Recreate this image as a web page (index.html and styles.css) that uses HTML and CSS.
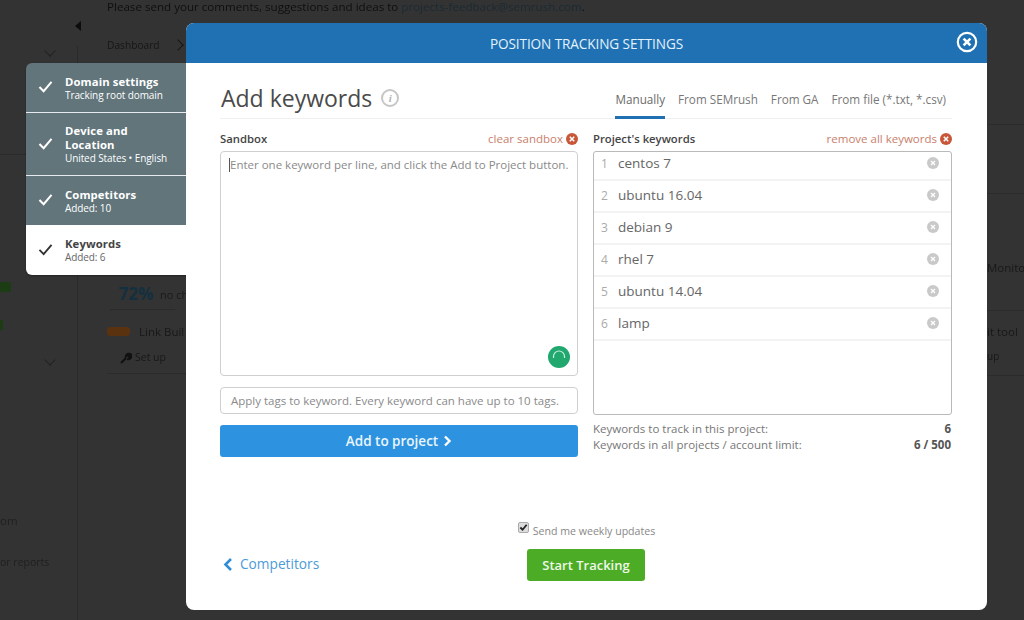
FILE: index.html
```html
<!DOCTYPE html>
<html lang="en">
<head>
<meta charset="utf-8">
<title>Position Tracking Settings</title>
<link rel="stylesheet" href="styles.css">
</head>
<body>
<div class="backdrop">
  <p class="bg-notice">Please send your comments, suggestions and ideas to <span class="bg-link">projects-feedback@semrush.com</span>.</p>
  <span class="bg-arrow"></span>
  <span class="bg-crumb">Dashboard</span>
  <span class="bg-chev bg-chev-c"></span>
  <span class="bg-vline"></span>
  <span class="bg-hline bg-hline-a"></span>
  <span class="bg-hline bg-hline-b"></span>
  <span class="bg-hline bg-hline-c"></span>
  <span class="bg-hline bg-hline-d"></span>
  <span class="bg-hline bg-hline-e"></span>
  <span class="bg-hline bg-hline-f"></span>
  <span class="bg-hline bg-hline-g"></span>
  <span class="bg-chev bg-chev-a"></span>
  <span class="bg-chev bg-chev-b"></span>
  <span class="bg-green bg-green-a"></span>
  <span class="bg-green bg-green-b"></span>
  <span class="bg-pct">72%</span>
  <span class="bg-nochange">no ch</span>
  <span class="bg-badge"></span>
  <span class="bg-text bg-link-building">Link Buil</span>
  <span class="bg-text bg-setup">Set up</span>
  <svg class="bg-wrench" viewBox="0 0 12 12"><path d="M1 11 L6 6 M6 6 A3 3 0 0 1 10 2 L8 4 L9 5 L11 3 A3 3 0 0 1 7 7" fill="none" stroke="#111" stroke-width="2"/></svg>
  <span class="bg-text bg-monito">Monito</span>
  <span class="bg-text bg-tool">it tool</span>
  <span class="bg-text bg-up">up</span>
  <span class="bg-text bg-om">om</span>
  <span class="bg-text bg-report">or reports</span>
</div>

<nav class="steps">
  <div class="step step-done step-a">
    <svg class="check" viewBox="0 0 16 14"><path d="M1.5 7.5 L6 12 L14.5 2" fill="none" stroke="currentColor" stroke-width="2.2"/></svg>
    <div><div class="step-title">Domain settings</div><div class="step-sub">Tracking root domain</div></div>
  </div>
  <div class="step step-done step-b">
    <svg class="check" viewBox="0 0 16 14"><path d="M1.5 7.5 L6 12 L14.5 2" fill="none" stroke="currentColor" stroke-width="2.2"/></svg>
    <div><div class="step-title">Device and<br>Location</div><div class="step-sub">United States • English</div></div>
  </div>
  <div class="step step-done step-c">
    <svg class="check" viewBox="0 0 16 14"><path d="M1.5 7.5 L6 12 L14.5 2" fill="none" stroke="currentColor" stroke-width="2.2"/></svg>
    <div><div class="step-title">Competitors</div><div class="step-sub">Added: 10</div></div>
  </div>
  <div class="step step-current">
    <svg class="check" viewBox="0 0 16 14"><path d="M1.5 7.5 L6 12 L14.5 2" fill="none" stroke="currentColor" stroke-width="2"/></svg>
    <div><div class="step-title">Keywords</div><div class="step-sub">Added: 6</div></div>
  </div>
</nav>

<main class="modal">
  <header class="modal-head">
    <span class="modal-title">POSITION TRACKING SETTINGS</span>
    <svg class="modal-close" viewBox="0 0 22 22"><circle cx="11" cy="11" r="9.2" fill="none" stroke="#fff" stroke-width="2.2"/><path d="M7.6 7.6 L14.4 14.4 M14.4 7.6 L7.6 14.4" stroke="#fff" stroke-width="2.6"/></svg>
  </header>
  <div class="modal-body">
    <div class="title-row">
      <div class="title-left">
        <h1 class="page-title">Add keywords</h1>
        <span class="info"><i>i</i></span>
      </div>
      <div class="tabs">
        <span class="tab tab-active">Manually</span>
        <span class="tab">From SEMrush</span>
        <span class="tab">From GA</span>
        <span class="tab">From file (*.txt, *.csv)</span>
      </div>
    </div>
    <div class="columns">
      <section class="col col-left">
        <div class="col-head">
          <span class="col-label">Sandbox</span>
          <span class="col-action">clear sandbox <svg class="x-dot" viewBox="0 0 12 12"><circle cx="6" cy="6" r="6" fill="#c8573a"/><path d="M3.8 3.8 L8.2 8.2 M8.2 3.8 L3.8 8.2" stroke="#fff" stroke-width="1.5"/></svg></span>
        </div>
        <div class="sandbox">
          <span class="placeholder"><span class="caret"></span>Enter one keyword per line, and click the Add to Project button.</span>
          <svg class="spinner" viewBox="0 0 22 22"><circle cx="11" cy="11" r="11" fill="#21a86e"/><path d="M5.5 12 L5.5 10.5 A5.5 5.5 0 0 1 16.5 10.5 L16.5 12" fill="none" stroke="#c6f0e0" stroke-width="1.2"/></svg>
        </div>
        <div class="tags">Apply tags to keyword. Every keyword can have up to 10 tags.</div>
        <div class="add-btn">Add to project <svg class="chev-r" viewBox="0 0 9 12"><path d="M2 1.5 L6.5 6 L2 10.5" fill="none" stroke="#fff" stroke-width="2.4"/></svg></div>
      </section>
      <section class="col col-right">
        <div class="col-head">
          <span class="col-label">Project's keywords</span>
          <span class="col-action">remove all keywords <svg class="x-dot" viewBox="0 0 12 12"><circle cx="6" cy="6" r="6" fill="#c8573a"/><path d="M3.8 3.8 L8.2 8.2 M8.2 3.8 L3.8 8.2" stroke="#fff" stroke-width="1.5"/></svg></span>
        </div>
        <ol class="kw-list">
          <li class="kw"><span class="kw-n">1</span><span class="kw-t">centos 7</span><svg class="kw-x" viewBox="0 0 12 12"><circle cx="6" cy="6" r="6" fill="#c9c9c9"/><path d="M4 4 L8 8 M8 4 L4 8" stroke="#fff" stroke-width="1.3"/></svg></li>
          <li class="kw"><span class="kw-n">2</span><span class="kw-t">ubuntu 16.04</span><svg class="kw-x" viewBox="0 0 12 12"><circle cx="6" cy="6" r="6" fill="#c9c9c9"/><path d="M4 4 L8 8 M8 4 L4 8" stroke="#fff" stroke-width="1.3"/></svg></li>
          <li class="kw"><span class="kw-n">3</span><span class="kw-t">debian 9</span><svg class="kw-x" viewBox="0 0 12 12"><circle cx="6" cy="6" r="6" fill="#c9c9c9"/><path d="M4 4 L8 8 M8 4 L4 8" stroke="#fff" stroke-width="1.3"/></svg></li>
          <li class="kw"><span class="kw-n">4</span><span class="kw-t">rhel 7</span><svg class="kw-x" viewBox="0 0 12 12"><circle cx="6" cy="6" r="6" fill="#c9c9c9"/><path d="M4 4 L8 8 M8 4 L4 8" stroke="#fff" stroke-width="1.3"/></svg></li>
          <li class="kw"><span class="kw-n">5</span><span class="kw-t">ubuntu 14.04</span><svg class="kw-x" viewBox="0 0 12 12"><circle cx="6" cy="6" r="6" fill="#c9c9c9"/><path d="M4 4 L8 8 M8 4 L4 8" stroke="#fff" stroke-width="1.3"/></svg></li>
          <li class="kw"><span class="kw-n">6</span><span class="kw-t">lamp</span><svg class="kw-x" viewBox="0 0 12 12"><circle cx="6" cy="6" r="6" fill="#c9c9c9"/><path d="M4 4 L8 8 M8 4 L4 8" stroke="#fff" stroke-width="1.3"/></svg></li>
        </ol>
        <div class="stat stat-first"><span>Keywords to track in this project:</span><b>6</b></div>
        <div class="stat"><span>Keywords in all projects / account limit:</span><b>6 / 500</b></div>
      </section>
    </div>
    <div class="foot">
      <a class="back"><svg class="chev-l" viewBox="0 0 10 13"><path d="M8 1 L2.5 6.5 L8 12" fill="none" stroke="#2e8fd8" stroke-width="2.6"/></svg>Competitors</a>
      <div class="foot-center">
        <label class="updates"><span class="cb"><svg viewBox="0 0 10 10"><path d="M1.5 5 L4 7.5 L8.5 2" fill="none" stroke="#222" stroke-width="2"/></svg></span>Send me weekly updates</label>
        <div class="start-btn">Start Tracking</div>
      </div>
    </div>
  </div>
</main>
</body>
</html>
```
FILE: styles.css
```css
* { box-sizing: border-box; }
html, body { margin: 0; padding: 0; }
body {
  width: 1024px;
  height: 620px;
  overflow: hidden;
  position: relative;
  background: #333333;
  font-family: "Open Sans", "Noto Sans", "Liberation Sans", sans-serif;
  color: #555;
}

/* dimmed page behind the dialog */
.backdrop { position: absolute; inset: 0; overflow: hidden; filter: blur(.5px); }
.backdrop > * { position: absolute; }
.bg-notice { left: 107px; top: 0; margin: 0; font-size: 11.6px; line-height: 14px; color: #0f0f0f; white-space: nowrap; }
.bg-link { color: #1b2a33; }
.bg-arrow { left: 75px; top: 21px; border: 5px solid transparent; border-right: 6px solid #0c0c0c; border-left: 0; height: 0; width: 0; }
.bg-crumb { left: 107px; top: 38px; font-size: 10.2px; color: #161616; }
.bg-vline { left: 77px; top: 46px; bottom: 0; width: 1px; background: #2a2a2a; }
.bg-hline { height: 1px; background: #2b2b2b; }
.bg-hline-a { left: 0; width: 26px; top: 154px; }
.bg-hline-b { left: 987px; right: 0; top: 124px; }
.bg-hline-c { left: 987px; right: 0; top: 193px; }
.bg-hline-d { left: 987px; right: 0; top: 310px; }
.bg-hline-e { left: 987px; right: 0; top: 375px; }
.bg-hline-f { left: 107px; width: 79px; top: 373px; }
.bg-hline-g { left: 110px; width: 65px; top: 309px; }
.bg-chev { width: 8px; height: 8px; border-right: 1.5px solid #222; border-bottom: 1.5px solid #222; transform: rotate(45deg); left: 46px; }
.bg-chev-a { top: 47px; }
.bg-chev-b { top: 356px; }
.bg-chev-c { left: 174px; top: 41px; transform: rotate(-45deg); border-color: #161616; }
.bg-green { background: #1c3d14; left: 0; height: 10px; }
.bg-green-a { width: 11px; top: 282px; }
.bg-green-b { width: 3px; top: 320px; }
.bg-pct { left: 119px; top: 283px; font-size: 17px; line-height: 22px; font-weight: 700; color: #12303f; }
.bg-nochange { left: 160px; top: 287px; font-size: 11px; line-height: 16px; color: #1a1a1a; }
.bg-badge { left: 107px; top: 327px; width: 23px; height: 9px; border-radius: 3px; background: #5a3210; }
.bg-text { font-size: 11.5px; line-height: 16px; color: #181818; white-space: nowrap; }
.bg-link-building { left: 139px; top: 324px; }
.bg-setup { left: 135px; top: 349px; font-size: 10.5px; }
.bg-wrench { left: 120px; top: 352px; width: 12px; height: 12px; }
.bg-monito { left: 987px; top: 260px; }
.bg-tool { left: 987px; top: 324px; }
.bg-up { left: 987px; top: 348px; font-size: 10px; }
.bg-om { left: 0; top: 513px; color: #202020; }
.bg-report { left: 0; top: 554px; color: #202020; font-size: 10.5px; }

/* step list, on the dialog's left */
.steps {
  position: absolute;
  left: 26px;
  top: 63px;
  width: 162px;
  border-radius: 6px 0 0 6px;
  overflow: hidden;
  display: flex;
  flex-direction: column;
  box-shadow: 0 1px 2px rgba(0,0,0,.3);
}
.step { display: flex; align-items: center; padding-left: 12px; gap: 12px; }
.step-done { background: #61757b; color: #fff; border-bottom: 1px solid #e6ecee; }
.step-a { height: 50px; }
.step-b { height: 63px; }
.step-c { height: 49px; border-bottom: 0; }
.step-current { height: 50px; background: #fff; color: #333; }
.check { width: 15px; height: 13px; flex: none; margin-top: -2px; }
.step-title { font-size: 11.3px; line-height: 14px; font-weight: 700; letter-spacing: .1px; white-space: nowrap; }
.step-sub { font-size: 10px; line-height: 12px; letter-spacing: -.1px; white-space: nowrap; }
.step-current .step-title { color: #444; }
.step-current .step-sub { color: #666; }

/* dialog */
.modal {
  position: absolute;
  left: 186px;
  top: 23px;
  width: 801px;
  height: 587px;
  background: #fff;
  border-radius: 8px;
  overflow: hidden;
}
.modal-head {
  height: 40px;
  background: #1f71b4;
  display: flex;
  align-items: center;
  justify-content: center;
  position: relative;
}
.modal-title { color: #e4f1fa; font-size: 13.6px; letter-spacing: -.1px; }
.modal-close { position: absolute; right: 9px; top: 8px; width: 22px; height: 22px; }
.modal-body { padding: 0 35px 0 34px; }

.title-row {
  display: flex;
  justify-content: space-between;
  align-items: flex-end;
  height: 56px;
  border-bottom: 1px solid #f0f0f0;
}
.title-left { display: flex; align-items: center; gap: 9px; align-self: flex-start; margin-top: 17px; padding-left: 1px; }
.page-title { margin: 0; font-weight: 400; font-size: 23px; line-height: 36px; color: #4a4a4a; }
.info {
  width: 18px; height: 18px; border-radius: 50%; border: 2px solid #c6c6c6;
  display: flex; align-items: center; justify-content: center;
  font: italic 700 11px/1 "Liberation Serif", serif; color: #b5b5b5;
}
.info i { font-style: italic; }
.tabs { display: flex; gap: 13px; margin-right: 6px; }
.tab { font-size: 11.7px; line-height: 16px; color: #777; padding-bottom: 9px; border-bottom: 3px solid transparent; margin-bottom: -1px; white-space: nowrap; }
.tab-active { color: #6a6a6a; border-bottom-color: #1f71b4; }

.columns { display: flex; gap: 15px; }
.col { width: 359px; display: flex; flex-direction: column; }
.col-left { width: 358px; }
.col-head { display: flex; justify-content: space-between; align-items: center; height: 32px; padding-top: 7px; }
.col-label { font-size: 11.3px; font-weight: 600; color: #444; }
.col-action { font-size: 11.5px; color: #c8806c; display: flex; align-items: center; gap: 3px; white-space: nowrap; }
.x-dot { width: 12px; height: 12px; }

.sandbox {
  height: 225px;
  border: 1px solid #cfcfcf;
  border-radius: 4px;
  position: relative;
  padding: 4px 8px;
}
.placeholder { font-size: 11.5px; line-height: 17px; color: #8a8a8a; white-space: nowrap; display: flex; align-items: center; }
.caret { width: 1px; height: 14px; background: #555; flex: none; }
.spinner { position: absolute; right: 7px; bottom: 7px; width: 22px; height: 22px; }
.tags {
  margin-top: 11px;
  height: 27px;
  border: 1px solid #cfcfcf;
  border-radius: 4px;
  padding-left: 10px;
  font-size: 11.5px;
  line-height: 25px;
  color: #8a8a8a;
  white-space: nowrap;
}
.add-btn {
  margin-top: 11px;
  height: 32px;
  background: #2d93e0;
  border-radius: 3px;
  color: #e9f5fd;
  font-size: 13.5px;
  font-weight: 600;
  display: flex;
  align-items: center;
  justify-content: center;
  gap: 5px;
}
.chev-r { width: 9px; height: 12px; }

.kw-list {
  list-style: none;
  margin: 0;
  padding: 0;
  height: 264px;
  border: 1px solid #b9b9b9;
  border-radius: 3px;
}
.kw {
  height: 32px;
  display: flex;
  align-items: center;
  padding: 0 12px 2px 7px;
  border-bottom: 2px solid #f3f3f3;
}
.kw:first-child { height: 29px; padding-bottom: 5px; }
.kw-n { width: 17px; font-size: 12px; color: #aaa; }
.kw-t { flex: 1; font-size: 13.5px; color: #666; }
.kw-x { width: 12px; height: 12px; }
.stat { display: flex; justify-content: space-between; font-size: 11.5px; line-height: 16px; color: #777; padding-right: 1px; }
.stat-first { margin-top: 6px; }
.stat b { color: #555; font-weight: 700; }

.foot { position: relative; height: 100px; margin-top: 66px; }
.foot-center { display: flex; flex-direction: column; align-items: center; width: 270px; margin-left: 231px; }
.back {
  position: absolute; left: 3px; top: 31px;
  display: flex; align-items: center; gap: 7px;
  font-size: 13.7px; line-height: 20px; color: #4c9bd8;
}
.chev-l { width: 10px; height: 13px; }
.updates { display: flex; align-items: center; gap: 4px; font-size: 10.6px; line-height: 16px; color: #888; white-space: nowrap; }
.cb {
  width: 11px; height: 11px; border: 1px solid #aaa; border-radius: 2px; background: #ddd;
  display: flex; margin-top: -8px; margin-left: 1px;
}
.cb svg { width: 9px; height: 9px; }
.start-btn {
  margin-top: 10px;
  width: 118px; height: 32px;
  background: #4dac26;
  border-radius: 3px;
  color: #eef8e8;
  font-size: 13px;
  font-weight: 600;
  display: flex; align-items: center; justify-content: center;
}
```
